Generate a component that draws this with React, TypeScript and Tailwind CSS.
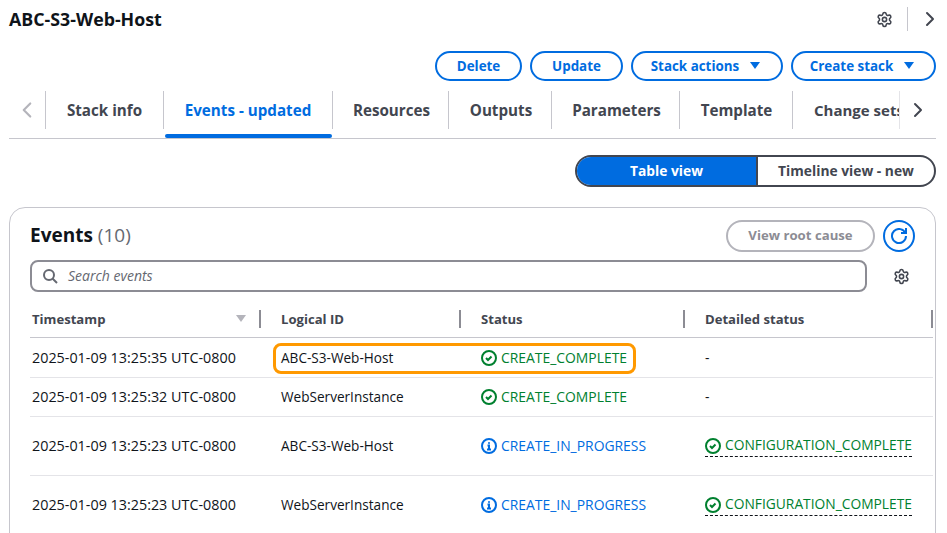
import { ChevronLeft, ChevronRight, Settings } from 'lucide-react';

const rows = [
  { time: '2025-01-09 13:25:35 UTC-0800', id: 'ABC-S3-Web-Host', status: 'CREATE_COMPLETE', detail: '', rowClass: 'h-[40px] pt-px', highlight: true },
  { time: '2025-01-09 13:25:32 UTC-0800', id: 'WebServerInstance', status: 'CREATE_COMPLETE', detail: '', rowClass: 'h-[39px]' },
  { time: '2025-01-09 13:25:23 UTC-0800', id: 'ABC-S3-Web-Host', status: 'CREATE_IN_PROGRESS', detail: 'CONFIGURATION_COMPLETE', rowClass: 'h-[59px]' },
  { time: '2025-01-09 13:25:23 UTC-0800', id: 'WebServerInstance', status: 'CREATE_IN_PROGRESS', detail: 'CONFIGURATION_COMPLETE', rowClass: 'h-[59px]' },
];

const tabs = [
  { label: 'Stack info', width: 'w-[118px]' },
  { label: 'Events - updated', width: 'w-[169px]', active: true },
  { label: 'Resources', width: 'w-[116px] pl-[2px]' },
  { label: 'Outputs', width: 'w-[103px] pl-[2px]' },
  { label: 'Parameters', width: 'w-[128px] pl-[2px]' },
  { label: 'Template', width: 'w-[113px] pl-px' },
];

const CheckIcon = () => (
  <svg viewBox="0 0 16 16" className="h-[16px] w-[16px] shrink-0 fill-none stroke-[#00802f] stroke-2">
    <circle cx="8" cy="8" r="7" />
    <path d="m5 8 2 2 3.5-3.5" />
  </svg>
);

const InfoIcon = () => (
  <svg viewBox="0 0 16 16" className="h-[16px] w-[16px] shrink-0 fill-none stroke-[#006ce0] stroke-2">
    <circle cx="8" cy="8" r="7" />
    <path d="M8 11.5V7.5H6.5" />
    <path d="M10 11.5H6" />
    <path d="M8 4.2v1.6" />
  </svg>
);

const Caret = ({ className }: { className: string }) => (
  <svg viewBox="0 0 16 16" className={className}>
    <path d="M3 4h10l-5 7z" />
  </svg>
);

const PillButton = ({ label, caret, width }: { label: string; caret?: boolean; width: string }) => (
  <button className={`flex h-[30px] items-center justify-center gap-[8px] rounded-full border-2 border-[#006ce0] text-[13.4px] font-bold text-[#006ce0] ${width}`}>
    {label}
    {caret && <Caret className="h-[16px] w-[16px] fill-[#006ce0]" />}
  </button>
);

const HeaderCell = ({ label, width, pad, sorted }: { label: string; width: string; pad: string; sorted?: boolean }) => (
  <div className={`flex items-center justify-between text-[13.1px] font-bold text-[#424650] ${width} ${pad}`}>
    <span className="pt-[2px]">{label}</span>
    <span className="flex items-center gap-[10px]">
      {sorted && <Caret className="h-[16px] w-[16px] fill-[#b4b4bb]" />}
      <span className="h-[18px] w-[2px] bg-[#8c8c94]" />
    </span>
  </div>
);

export default function App() {
  return (
    <div className="h-[533px] w-[947px] overflow-hidden bg-white pl-[9px] pr-[11px] font-['Open_Sans',sans-serif] text-[#0f141a]">
      <div className="flex h-[38px] items-center justify-between">
        <h1 className="text-[17.8px] font-bold">ABC-S3-Web-Host</h1>
        <div className="flex items-center">
          <Settings className="h-[17px] w-[17px] text-[#424650]" strokeWidth={2.2} />
          <span className="ml-[14px] h-[24px] w-px bg-[#c6c6cd]" />
          <ChevronRight className="ml-[10px] mr-[-6px] h-[24px] w-[24px] text-[#424650]" strokeWidth={2} />
        </div>
      </div>

      <div className="mt-[13px] flex justify-end gap-[8px]">
        <PillButton label="Delete" width="w-[87px]" />
        <PillButton label="Update" width="w-[93px]" />
        <PillButton label="Stack actions" caret width="w-[152px]" />
        <PillButton label="Create stack" caret width="w-[145px]" />
      </div>

      <div className="relative mt-[10px] flex h-[48px] border-b border-[#c6c6cd]">
        <div className="flex h-[38px] w-[36px] items-center">
          <ChevronLeft className="ml-[5px] h-[26px] w-[26px] text-[#b4b4bb]" strokeWidth={2} />
        </div>
        {tabs.map((tab) => (
          <div
            key={tab.label}
            className={`relative flex h-[38px] shrink-0 items-center justify-center border-l border-[#c6c6cd] text-[15.2px] font-bold ${tab.width} ${tab.active ? 'text-[#006ce0]' : 'text-[#424650]'}`}
          >
            {tab.label}
            {tab.active && <span className="absolute bottom-[-9px] left-[1px] right-0 h-[4px] rounded-sm bg-[#006ce0]" />}
          </div>
        ))}
        <div className="flex h-[38px] flex-1 items-center overflow-hidden border-l border-[#c6c6cd] pl-[21px] text-[15px] font-bold whitespace-nowrap text-[#424650]">
          Change sets
        </div>
        <div className="flex h-[38px] w-[37px] shrink-0 items-center border-l border-[#e4e4e8] bg-white pl-[6px]">
          <ChevronRight className="h-[24px] w-[24px] text-[#424650]" strokeWidth={2} />
        </div>
      </div>

      <div className="mt-[16px] flex justify-end">
        <div className="flex h-[32px] w-[361px] overflow-hidden rounded-full border-2 border-[#424650] text-[13.8px] font-bold">
          <div className="flex w-[179px] items-center justify-center bg-[#006ce0] text-white">Table view</div>
          <div className="flex flex-1 items-center justify-center border-l-2 border-[#424650] text-[#424650]">Timeline view - new</div>
        </div>
      </div>

      <div className="mt-[20px] h-[400px] rounded-t-[16px] border border-[#c6c6cd] pl-[20px] pr-[3px]">
        <div className="flex h-[52px] items-start justify-between pr-[17px] pt-[12px]">
          <h2 className="text-[19px] leading-[30px] font-bold">
            Events <span className="font-normal text-[#656871]">(10)</span>
          </h2>
          <div className="flex items-center gap-[8px]">
            <button className="flex h-[32px] w-[149px] items-center justify-center rounded-full border-2 border-[#b4b4bb] text-[13.2px] font-bold text-[#8c8c94]">
              View root cause
            </button>
            <button className="flex h-[32px] w-[32px] items-center justify-center rounded-full border-2 border-[#006ce0]">
              <svg viewBox="0 0 16 16" className="h-[16px] w-[16px] fill-none stroke-[#006ce0] stroke-2">
                <path d="M10 5h5V0" />
                <path d="M15 8a7 7 0 1 1-.53-2.68" />
              </svg>
            </button>
          </div>
        </div>

        <div className="flex items-center">
          <div className="flex h-[32px] w-[837px] items-center rounded-lg border-2 border-[#8c8c94] pl-[10px]">
            <svg viewBox="0 0 16 16" className="h-[16px] w-[16px] fill-none stroke-[#656871] stroke-2">
              <circle cx="7" cy="7" r="5" />
              <path d="m15 15-4.5-4.5" />
            </svg>
            <span className="ml-[10px] pb-px text-[14px] italic text-[#656871]">Search events</span>
          </div>
          <Settings className="ml-[26px] h-[17px] w-[17px] text-[#424650]" strokeWidth={2.2} />
        </div>

        <div className="mt-[8px] flex h-[38px] w-[903px] border-b border-[#c6c6cd]">
          <HeaderCell label="Timestamp" width="w-[231px]" pad="pl-[2px]" sorted />
          <HeaderCell label="Logical ID" width="w-[200px]" pad="pl-[20px]" />
          <HeaderCell label="Status" width="w-[224px]" pad="pl-[20px]" />
          <HeaderCell label="Detailed status" width="w-[248px]" pad="pl-[20px]" />
        </div>

        {rows.map((row, i) => (
          <div key={i} className={`relative flex w-[903px] border-b border-[#e4e4e8] ${row.rowClass}`}>
            <div className="flex w-[231px] items-center pl-[2px] text-[14.35px]">{row.time}</div>
            <div className="flex w-[200px] items-center pl-[20px] text-[13.6px]">{row.id}</div>
            <div className={`flex w-[224px] items-center gap-[4px] pl-[20px] text-[13.9px] ${row.status === 'CREATE_COMPLETE' ? 'text-[#00802f]' : 'text-[#006ce0]'}`}>
              {row.status === 'CREATE_COMPLETE' ? <CheckIcon /> : <InfoIcon />}
              {row.status}
            </div>
            <div className="flex items-center pl-[20px] text-[13.8px]">
              {row.detail ? (
                <span className="flex h-[22px] items-center gap-[4px] border-b border-dashed border-[#0f141a] text-[#00802f]">
                  <CheckIcon />
                  {row.detail}
                </span>
              ) : (
                '-'
              )}
            </div>
            {row.highlight && (
              <span className="absolute left-[243px] top-[5px] h-[31px] w-[363px] rounded-lg border-[3px] border-[#ff9900]" />
            )}
          </div>
        ))}
      </div>
    </div>
  );
}
